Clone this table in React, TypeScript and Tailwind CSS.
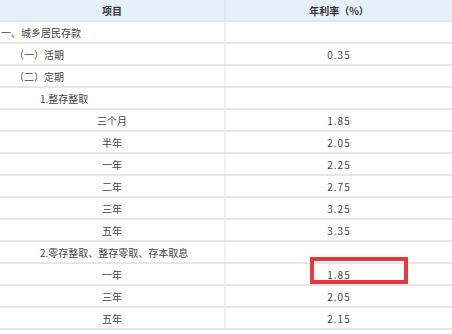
import React from "react";

type Row = { label: string; align: "left" | "center"; indent?: number; value?: string };

const rows: Row[] = [
  { label: "一、城乡居民存款", align: "left", indent: 1 },
  { label: "（一）活期", align: "left", indent: 14, value: "0.35" },
  { label: "（二）定期", align: "left", indent: 14 },
  { label: "1.整存整取", align: "left", indent: 40 },
  { label: "三个月", align: "center", value: "1.85" },
  { label: "半年", align: "center", value: "2.05" },
  { label: "一年", align: "center", value: "2.25" },
  { label: "二年", align: "center", value: "2.75" },
  { label: "三年", align: "center", value: "3.25" },
  { label: "五年", align: "center", value: "3.35" },
  { label: "2.零存整取、整存零取、存本取息", align: "left", indent: 40 },
  { label: "一年", align: "center", value: "1.85" },
  { label: "三年", align: "center", value: "2.05" },
  { label: "五年", align: "center", value: "2.15" },
];

export default function App() {
  return (
    <div
      className="relative w-[452px] h-[334px] bg-white overflow-hidden text-[10px] text-[#444]"
      style={{ fontFamily: '"Noto Sans CJK SC", "Noto Sans", sans-serif' }}
    >
      <div className="grid grid-cols-[226px_226px] h-[20px] bg-[#e6f0fb] font-bold text-[#333]">
        <div className="flex items-center justify-center border-r-2 border-[#dde6ef]">项目</div>
        <div className="flex items-center justify-center">年利率（%）</div>
      </div>
      {rows.map((r, i) => (
        <div key={i} className="grid grid-cols-[226px_226px] h-[22px] border-t-2 border-[#e6e6e6]">
          <div
            className={
              "flex items-center border-r-2 border-[#efefef] " +
              (r.align === "center" ? "justify-center" : "justify-start")
            }
            style={r.align === "left" ? { paddingLeft: r.indent } : undefined}
          >
            {r.label}
          </div>
          <div className="flex items-center justify-center tracking-[1px]">{r.value ?? ""}</div>
        </div>
      ))}
      <div className="h-[2px] bg-[#e6e6e6]" />
      <div className="absolute left-[310px] top-[257px] w-[98px] h-[27px] border-4 border-[#e33a3f]" />
    </div>
  );
}
